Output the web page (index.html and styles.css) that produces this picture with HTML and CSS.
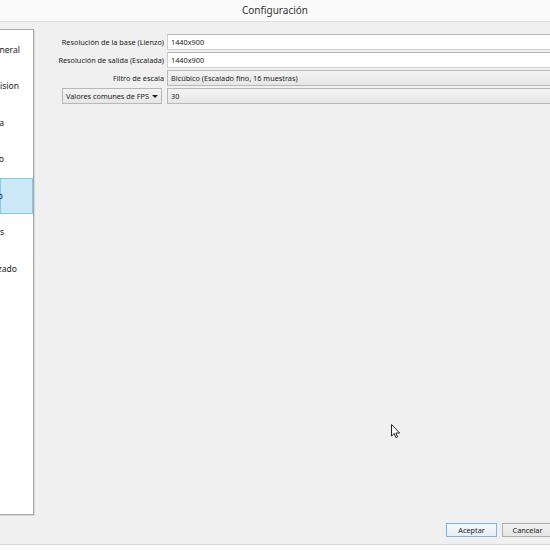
FILE: index.html
```html
<!DOCTYPE html>
<html lang="es">
<head>
<meta charset="utf-8">
<title>Configuración</title>
<link rel="stylesheet" href="styles.css">
</head>
<body>
<div class="titlebar">Configuración</div>
<div class="main">
  <ul class="sidebar">
    <li class="item i-general"><span>General</span></li>
    <li class="item i-emision"><span>Emision</span></li>
    <li class="item i-salida"><span>Salida</span></li>
    <li class="item i-audio"><span>Audio</span></li>
    <li class="item i-video selected"><span>Video</span></li>
    <li class="item i-atajos"><span>Atajos</span></li>
    <li class="item i-avanzado"><span>Avanzado</span></li>
  </ul>
  <div class="form">
    <label class="label">Resolución de la base (Lienzo)</label>
    <div class="field input">1440x900</div>
    <label class="label">Resolución de salida (Escalada)</label>
    <div class="field input">1440x900</div>
    <label class="label">Filtro de escala</label>
    <div class="field combo">Bicúbico (Escalado fino, 16 muestras)</div>
    <div class="label"><div class="select"><span>Valores comunes de FPS</span><span class="arrow"></span></div></div>
    <div class="field combo">30</div>
  </div>
</div>
<div class="buttons">
  <button class="btn default">Aceptar</button>
  <button class="btn">Cancelar</button>
</div>
<div class="statusbar"></div>
<svg class="cursor" width="10" height="16" viewBox="0 0 10 16">
  <path d="M0.5 0.5 L0.5 12 L3.2 9.5 L5 13.6 L6.6 12.9 L4.9 9 L8.6 9 Z" fill="#fff" stroke="#222" stroke-width="1" stroke-linejoin="miter"/>
</svg>
</body>
</html>
```
FILE: styles.css
```css
html, body {
  margin: 0;
  padding: 0;
}
body {
  width: 550px;
  height: 550px;
  overflow: hidden;
  background: #f0f0f0;
  font-family: "Noto Sans", "Open Sans", sans-serif;
  font-size: 7.3px;
  color: #1a1a1a;
  position: relative;
}
.titlebar {
  height: 21px;
  line-height: 21px;
  background: #fafafa;
  border-bottom: 1px solid #dedede;
  text-align: center;
  font-size: 10px;
  color: #333;
}
.main {
  display: flex;
  padding-top: 7px;
  height: 488px;
}
.sidebar {
  list-style: none;
  margin: 0 0 0 -1px;
  padding: 1.5px 0 0 0;
  width: 35px;
  height: 486px;
  box-sizing: border-box;
  background: #fff;
  border: 1px solid #a8a8a8;
  box-shadow: 1px 1px 0 #d8d8d8;
  overflow: hidden;
  flex: none;
}
.item {
  height: 36.5px;
  box-sizing: border-box;
  display: flex;
  justify-content: flex-end;
  align-items: center;
  white-space: nowrap;
  font-size: 8.6px;
  color: #222;
}
.item span {
  flex: none;
}
.i-general { padding-right: 13px; }
.i-emision { padding-right: 14px; }
.i-salida { padding-right: 29px; }
.i-audio { padding-right: 29px; }
.i-video { padding-right: 29px; }
.i-atajos { padding-right: 29px; }
.i-avanzado { padding-right: 16px; }
.item.selected {
  background: #cce8f7;
  border: 1px solid #86c7ef;
}
.form {
  display: grid;
  grid-template-columns: 130px 392px;
  grid-auto-rows: 16px;
  column-gap: 3px;
  row-gap: 2px;
  padding-top: 5px;
  align-content: start;
  flex: none;
}
.label {
  justify-self: end;
  align-self: center;
  white-space: nowrap;
  line-height: 16px;
}
.field {
  box-sizing: border-box;
  height: 16px;
  line-height: 14px;
  padding-left: 3px;
  white-space: nowrap;
}
.input {
  background: #fff;
  border: 1px solid #d0d0d0;
  border-top-color: #b4b4b4;
}
.combo {
  background: linear-gradient(#f3f3f3, #e6e6e6);
  border: 1px solid #b8b8b8;
}
.select {
  box-sizing: border-box;
  width: 100px;
  height: 16px;
  margin-right: 2px;
  padding-left: 3px;
  line-height: 14px;
  background: linear-gradient(#f3f3f3, #e6e6e6);
  border: 1px solid #b8b8b8;
  display: flex;
  align-items: center;
  justify-content: space-between;
}
.arrow {
  width: 0;
  height: 0;
  border-left: 3px solid transparent;
  border-right: 3px solid transparent;
  border-top: 3px solid #222;
  margin-right: 3px;
}
.buttons {
  display: flex;
  justify-content: flex-end;
  gap: 5px;
  margin-top: 6px;
  margin-right: -3px;
  height: 14px;
}
.btn {
  box-sizing: border-box;
  width: 51px;
  height: 14px;
  padding: 0;
  font-family: "Noto Sans", "Open Sans", sans-serif;
  font-size: 7.3px;
  line-height: 12px;
  color: #1a1a1a;
  background: linear-gradient(#f2f2f2, #e4e4e4);
  border: 1px solid #adadad;
  border-radius: 0;
}
.btn.default {
  border-color: #7eb4ea;
  background: linear-gradient(#f4f8fc, #e8eef5);
}
.statusbar {
  margin-top: 7px;
  height: 20px;
  border-top: 1px solid #d6d6d6;
  background: #fafafa;
}
.cursor {
  position: absolute;
  left: 391px;
  top: 424px;
}
```
